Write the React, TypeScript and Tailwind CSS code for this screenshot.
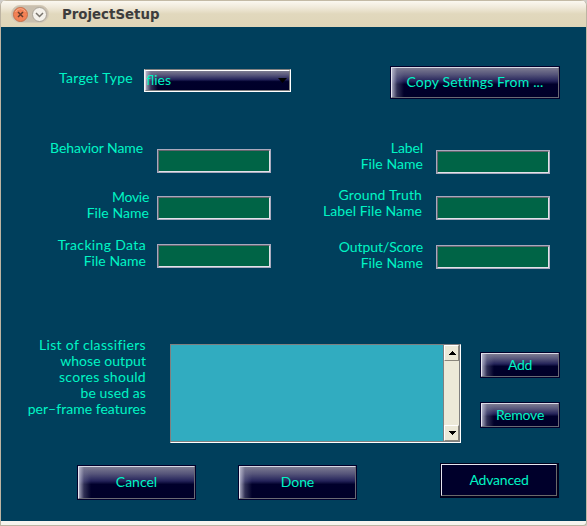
import type { ReactNode } from "react";

const glossy =
  "bg-[linear-gradient(90deg,rgba(190,190,210,0.85)_0px,rgba(120,120,150,0.4)_5px,transparent_12px),linear-gradient(180deg,#7c7b91_0%,#56557a_22%,#24235a_45%,#00002b_56%,#000029_100%)]";

function Lines({ items, className = "" }: { items: [string, string][]; className?: string }) {
  return (
    <div className={`shrink-0 whitespace-nowrap leading-4 ${className}`}>
      <div className="-mt-px flex flex-col items-end">
        {items.map(([text, tracking]) => (
          <span key={text} className={tracking}>{text}</span>
        ))}
      </div>
    </div>
  );
}

function GlossButton({ children, className = "" }: { children: ReactNode; className?: string }) {
  return (
    <button className={`shrink-0 border border-[#00002b] ${className}`}>
      <span className={`flex h-full w-full items-center justify-center border border-t-[#d8d8e4] border-r-[#6a6a74] border-b-[#6a6a74] border-l-[#e6e6f0] pb-[2px] whitespace-nowrap ${glossy}`}>
        {children}
      </span>
    </button>
  );
}

function Field({ className = "" }: { className?: string }) {
  return (
    <div className={`h-6 w-[114px] shrink-0 border border-[#a9a9bd] ${className}`}>
      <div className="h-full w-full border border-t-[#66666f] border-r-[#e2e2ea] border-b-[#e2e2ea] border-l-[#66666f] bg-[#006446]" />
    </div>
  );
}

function ScrollArrow({ down = false }: { down?: boolean }) {
  return (
    <div className="flex h-4 w-full items-center justify-center border border-t-white border-r-[#8a867c] border-b-[#8a867c] border-l-white bg-[#ece9d8]">
      <svg width="8" height="4" viewBox="0 0 8 4" shapeRendering="crispEdges">
        <path d={down ? "M0 0h8L4 4z" : "M0 4h8L4 0z"} fill="#000" />
      </svg>
    </div>
  );
}

export default function App() {
  return (
    <div className="h-[526px] w-[587px] overflow-hidden bg-[#d0cdc8]">
      <div className="flex h-full w-full flex-col overflow-hidden rounded-t-[6px] rounded-br-[4px] border border-t-0 border-[#bdb4a2] bg-[#f6f3ee] font-['Lato',sans-serif] text-[14px] text-[#00f5c4]">
        <header className="flex h-[27px] shrink-0 items-center border-t border-[#c4baa6] bg-[linear-gradient(180deg,#fbf8f1_0px,#efe8d8_7px,#e1d8bd_13px,#dfd5b8_26px)] pl-[10px]">
          <div className="flex h-[18px] w-[38px] items-center justify-between rounded-full border border-[#d4cab8] bg-[#c9bfae] px-px">
            <svg width="15" height="15" viewBox="0 0 15 15">
              <circle cx="7.5" cy="7.5" r="7" fill="#f38155" stroke="#c7714b" />
              <path d="M2.5 5a5.4 5.4 0 0 1 10 0" fill="none" stroke="#f8ad8b" />
              <path d="m5 5 5 5m0-5-5 5" stroke="#653c2b" strokeWidth="1.5" />
            </svg>
            <svg width="15" height="15" viewBox="0 0 15 15">
              <circle cx="7.5" cy="7.5" r="7" fill="#f4f1eb" stroke="#aaa397" />
              <path d="m4 6 3.5 3.5L11 6" fill="none" stroke="#77736c" strokeWidth="1.5" />
            </svg>
          </div>
          <h1 className="ml-[13px] pt-px font-['DejaVu_Sans',sans-serif] text-[13.33px] leading-4 font-bold text-[#3d3d3d]">ProjectSetup</h1>
        </header>

        <main className="flex h-[494px] shrink-0 flex-col bg-[#003f5c]">
          <section className="flex h-[114px] shrink-0 items-start pt-[39px]">
            <Lines className="mt-[5px] w-[132px]" items={[["Target Type", "tracking-[0.3px]"]]} />
            <div className="mt-[3px] ml-[11px] h-[23px] w-[147px] shrink-0 border border-t-[#808080] border-r-white border-b-white border-l-[#f5f5f5]">
              <div className={`flex h-full w-full items-center justify-between border border-t-white border-r-[#808080] border-b-[#808080] border-l-[#d8d8e4] pr-[2px] ${glossy}`}>
                <span className="pb-[2px]">flies</span>
                <svg className="mb-px" width="9" height="5" viewBox="0 0 9 5"><path d="M0 0h9L4.5 5z" fill="#000" /></svg>
              </div>
            </div>
            <GlossButton className="ml-[99px] h-[33px] w-[170px] tracking-[0.17px]">Copy Settings From ...</GlossButton>
          </section>

          <section className="flex h-[203px] shrink-0">
            <div className="flex w-[270px] shrink-0 flex-col">
              <div className="flex h-[47px]">
                <Lines className="w-[142px]" items={[["Behavior Name", "tracking-[-0.1px]"]]} />
                <Field className="mt-[8px] ml-[14px]" />
              </div>
              <div className="flex h-[48px]">
                <Lines className="mt-[2px] w-[148px]" items={[["Movie", "tracking-[-0.3px]"], ["File Name", "tracking-[0.05px]"]]} />
                <Field className="mt-[8px] ml-[8px]" />
              </div>
              <div className="flex h-[48px]">
                <Lines className="mt-[2px] w-[145px]" items={[["Tracking Data", "tracking-[0.35px]"], ["File Name", "tracking-[0.05px]"]]} />
                <Field className="mt-[8px] ml-[11px]" />
              </div>
            </div>
            <div className="flex w-[279px] shrink-0 flex-col">
              <div className="flex h-[47px]">
                <Lines className="w-[152px]" items={[["Label", "tracking-[-0.1px]"], ["File Name", "tracking-[0.05px]"]]} />
                <Field className="mt-[9px] ml-[13px]" />
              </div>
              <div className="flex h-[48px]">
                <Lines className="w-[151px]" items={[["Ground Truth", "tracking-[0.13px]"], ["Label File Name", "tracking-[0.05px]"]]} />
                <Field className="mt-[8px] ml-[14px]" />
              </div>
              <div className="flex h-[48px]">
                <Lines className="mt-[4px] w-[152px]" items={[["Output/Score", "tracking-[-0.08px]"], ["File Name", "tracking-[0.05px]"]]} />
                <Field className="mt-[9px] ml-[13px]" />
              </div>
            </div>
          </section>

          <section className="flex h-[99px] shrink-0">
            <Lines
              className="-mt-[6px] w-[145px]"
              items={[
                ["List of classifiers", "tracking-[0.35px]"],
                ["whose output", "tracking-[0.05px]"],
                ["scores should", "tracking-[0.3px]"],
                ["be used as", "tracking-[0.1px]"],
                ["per–frame features", "tracking-[0.03px]"],
              ]}
            />
            <div className="ml-[24px] flex h-[99px] w-[291px] shrink-0 border border-t-[#808080] border-r-white border-b-white border-l-[#808080] bg-[#31acc0]">
              <div className="flex-1 border-b border-[#808080]" />
              <div className="flex w-[17px] flex-col justify-between border-x border-b border-[#808080] bg-[#ece9d8]">
                <ScrollArrow />
                <ScrollArrow down />
              </div>
            </div>
            <div className="mt-[8px] ml-[19px] flex flex-col gap-6">
              <GlossButton className="h-[26px] w-[80px] tracking-[-0.3px]">Add</GlossButton>
              <GlossButton className="h-[26px] w-[80px] tracking-[-0.2px]">Remove</GlossButton>
            </div>
          </section>

          <footer className="flex items-start pt-[20px] pl-[76px]">
            <GlossButton className="mt-[2px] h-[35px] w-[119px]">Cancel</GlossButton>
            <GlossButton className="mt-[2px] ml-[42px] h-[35px] w-[119px] tracking-[-0.1px]">Done</GlossButton>
            <button className="ml-[83px] h-[35px] w-[119px] border border-r-2 border-b-2 border-[#00001c]">
              <span className="flex h-full w-full items-center justify-center border border-t-[#e6e6f0] border-r-[#6a6a6a] border-b-[#6a6a6a] border-l-[#e6e6f0] bg-[#00002b] pb-[2px] tracking-[-0.2px]">Advanced</span>
            </button>
          </footer>
        </main>
      </div>
    </div>
  );
}
